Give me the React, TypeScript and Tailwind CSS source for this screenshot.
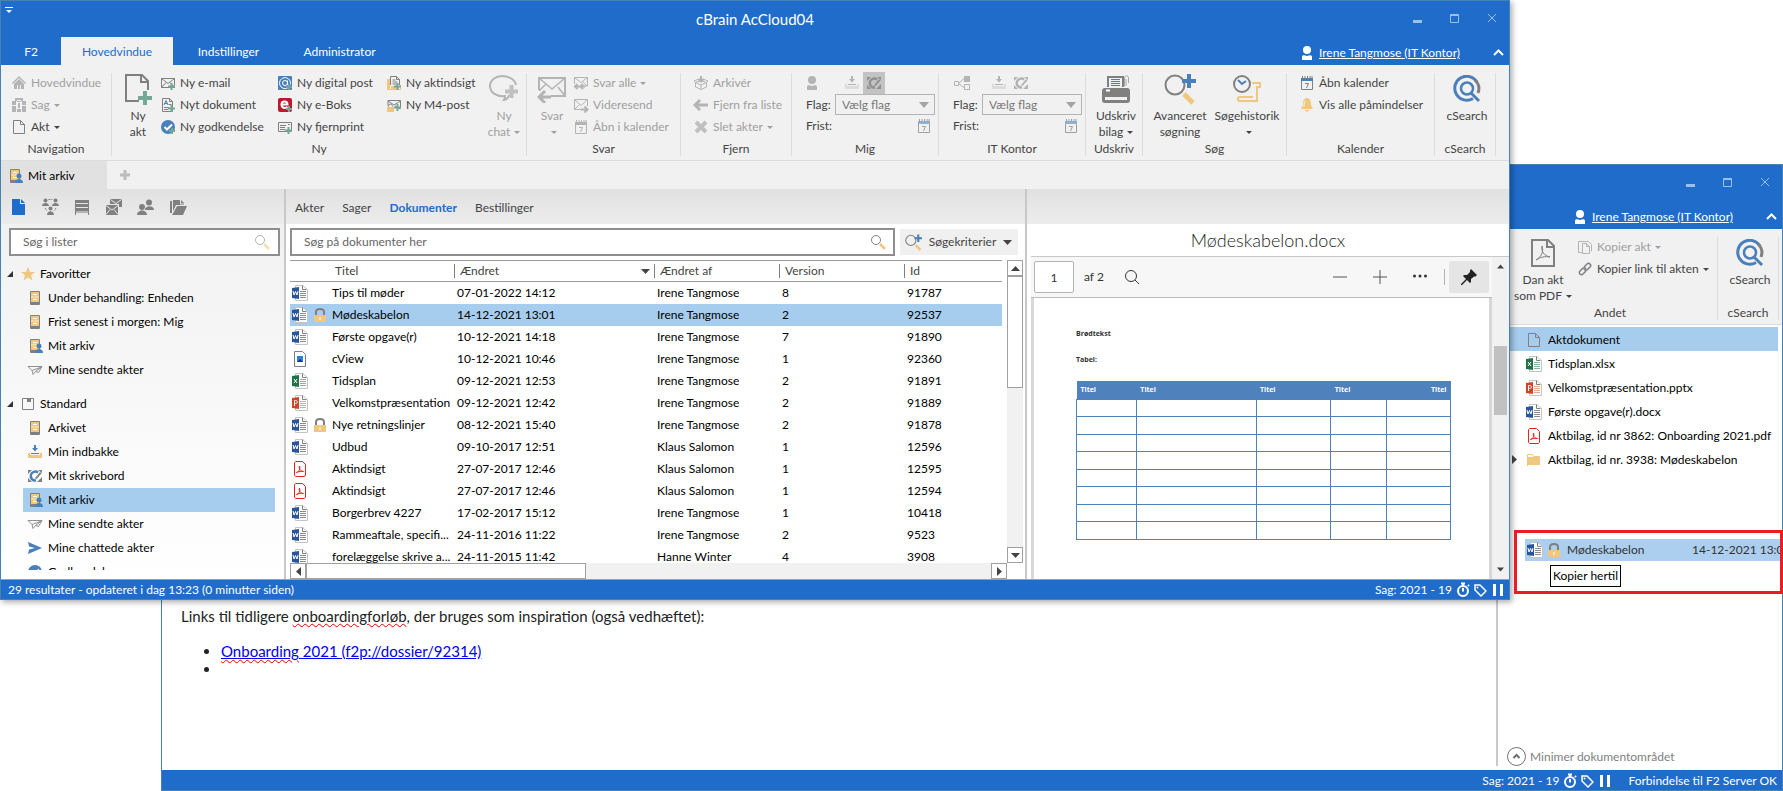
import type { ReactNode } from "react";

type Kids = { children?: ReactNode };
type Tone = { muted?: boolean };

const GREY = "#808080";
const SOFT = "#b4b4b4";
const BLUE = "#4a80ba";
const SAND = "#efc77f";
const GREEN = "#74a896";

/* ---------- icons ---------- */

function Svg({ w = 16, h = 16, vb, className = "", children }: Kids & { w?: number; h?: number; vb?: string; className?: string }) {
  return (
    <svg width={w} height={h} viewBox={vb ?? `0 0 ${w} ${h}`} fill="none" className={`shrink-0 ${className}`} aria-hidden="true">
      {children}
    </svg>
  );
}

function Plus({ x, y, s = 7, c = GREEN }: { x: number; y: number; s?: number; c?: string }) {
  const t = s > 10 ? 4 : 2;
  return <path d={`M${x + s / 2} ${y}v${s}M${x} ${y + s / 2}h${s}`} stroke={c} strokeWidth={t} />;
}

const HouseIcon = () => (
  <Svg>
    <path d="M8 1 1 8l1 1 6-6 6 6 1-1z" fill={SOFT} />
    <path d="M3 9l5-5 5 5v5h-3v-4H9v4H7v-4H6v4H3z" fill={SOFT} />
  </Svg>
);

const CaseIcon = () => (
  <Svg>
    <path d="M5 4V2h6v2" stroke={SOFT} strokeWidth="2" />
    <path d="M1 4h4v4H1zM11 4h4v4h-4zM6 4h4v1H6zM1 9h4v6H1zM11 9h4v6h-4zM6 12h4v3H6zM7 6h2v5H7z" fill={SOFT} />
  </Svg>
);

const PageIcon = ({ c = GREY }: { c?: string }) => (
  <Svg>
    <path d="M2.500 1.500h7l4 4v9h-11z" stroke={c} />
    <path d="M9.500 1.500v4h4" stroke={c} />
  </Svg>
);

const NewRecordIcon = () => (
  <Svg w={30} h={32}>
    <path d="M16 28H3V2h16l6 6v9" stroke={GREY} strokeWidth="2" />
    <path d="M18 2v7h7" stroke={GREY} strokeWidth="2" />
    <Plus x={15} y={18} s={14} />
  </Svg>
);

const Envelope = ({ c = GREY }: { c?: string }) => <path d="M1.500 3.500h13v9h-13zM1.500 3.500l6.500 5 6.500-5M1.500 12.500l4.500-5M14.500 12.500 10 7.500" stroke={c} />;

const NewMailIcon = () => (
  <Svg>
    <Envelope />
    <Plus x={8} y={8} />
  </Svg>
);

const NewDocIcon = () => (
  <Svg>
    <path d="M2.500 1.500h7l3 3v10h-10z" stroke={GREY} />
    <path d="M9.500 1.500v3h3M4 10.500h5M4 12.500h4M8.500 7.500h3" stroke={GREY} />
    <path d="M4 8l2-4.500L8 8M5 6.500h2" stroke={BLUE} />
    <Plus x={8} y={8} />
  </Svg>
);

const ApprovalIcon = ({ plus = true }: { plus?: boolean }) => (
  <Svg>
    <circle cx="8" cy="8" r="7" fill={BLUE} />
    <path d="M4.500 8l2.500 2.500 5-5" stroke="#fff" strokeWidth="2" />
    {plus && <Plus x={9} y={9} s={6} />}
  </Svg>
);

const DigitalPostIcon = () => (
  <Svg>
    <rect x="1" y="1" width="14" height="14" rx="1" fill={BLUE} />
    <circle cx="8" cy="8" r="2.500" stroke="#fff" />
    <path d="M10.500 5.500v4c1 2 3 .5 3-1.500a5.500 5.500 0 1 0-3 5" stroke="#fff" />
    <Plus x={9} y={9} s={6} />
  </Svg>
);

const EBoksIcon = () => (
  <Svg>
    <rect x="1" y="1" width="14" height="14" rx="2" fill="#c0172d" />
    <path d="M4.500 7.500h6c0-4-6-4-6 0s4 4 6 2.500" stroke="#fff" strokeWidth="2" />
    <Plus x={9} y={9} s={6} />
  </Svg>
);

const RemotePrintIcon = () => (
  <Svg>
    <path d="M1.500 3.500h13v9h-13zM3 6.500h6M3 8.500h5M3 10.500h5M11 5.500h2" stroke={GREY} />
    <Plus x={8} y={8} />
  </Svg>
);

const AccessIcon = () => (
  <Svg>
    <path d="M1 4h3v10h10v-4h1v5H1z" fill={SAND} />
    <path d="M4.500 10V1.500h6l3 3V10M10.500 1.500v3h3M6.500 5h3M6.500 7h5M6.500 9h5" stroke={GREY} />
    <path d="M5 11h8v4H5z" fill={SAND} />
    <Plus x={8} y={8} />
  </Svg>
);

const M4Icon = () => (
  <Svg>
    <path d="M2 9V3.500h12.500v7M2 4l6 4 6.500-4M9 9l5.500 3" stroke={GREY} />
    <path d="M2.500 9.500c0-3 4-3 4 0" stroke={GREY} />
    <path d="M1 10h7v5H1z" fill={SAND} />
    <Plus x={8} y={7} />
  </Svg>
);

const ChatIcon = () => (
  <Svg w={32} h={30}>
    <path d="M21 21c-1 3-3 5-5 5 1-1 1-3 1-4C8 23 2 18 2 12 2 6 8 2 14 2s13 3 14 9" stroke={SOFT} strokeWidth="2" />
    <Plus x={17} y={11} s={13} c="#c0c0c0" />
  </Svg>
);

const ReplyIcon = () => (
  <Svg w={30} h={28}>
    <path d="M2 15V3h26v18H14" stroke={SOFT} strokeWidth="2" />
    <path d="M2 3l13 11L28 3M2 16l7-7M28 21l-7-9" stroke={SOFT} strokeWidth="1.500" />
    <path d="M14 22H3M8 16l-6 6 6 6" stroke={SOFT} strokeWidth="3" />
  </Svg>
);

const ReplyAllIcon = () => (
  <Svg>
    <path d="M1.500 9V2.500h13V11H11M1.500 2.500l6.500 5 6.500-5M14 11l-4-4" stroke={SOFT} />
    <path d="M4.500 9 2 11.500 4.500 14M2 11.500h5M10 9l-2.500 2.500L10 14M8 11.500h4" stroke={SOFT} strokeWidth="2" />
  </Svg>
);

const ForwardIcon = () => (
  <Svg>
    <path d="M8 12.500H1.500v-10h13V9M1.500 2.500l6.500 6 6.500-6M1.500 12.500l5-5" stroke={SOFT} />
    <path d="M8 12.500h6M11.500 9.500l3 3-3 3" stroke={SOFT} strokeWidth="2" />
  </Svg>
);

const CalendarIcon = ({ top = BLUE, line = GREY }: { top?: string; line?: string }) => (
  <Svg>
    <path d="M2 3h12v3H2z" fill={top} />
    <path d="M3.500 1v3M6 1v3M8.500 1v3M11 1v3M13 1v3" stroke={line} />
    <path d="M2.500 6v8.500h11V6" stroke={line} />
    <path d="M6 8.500h3.500L7.500 13" stroke={line} />
  </Svg>
);

const ArchiveIcon = () => (
  <Svg>
    <path d="M2.500 7.500 8 10l5.500-2.500V12L8 14.500 2.500 12zM8 10v4.500M2.500 7.500 1 6l5-2M13.500 7.500 15 6l-5-2M2.500 7.500 8 5.500l5.500 2" stroke={SOFT} />
    <path d="M8 1v5M5.500 4 8 6.500 10.500 4" stroke={SOFT} strokeWidth="2" />
  </Svg>
);

const BackIcon = () => (
  <Svg>
    <path d="M15 8H4M7 3 2 8l5 5" stroke={SOFT} strokeWidth="3" />
  </Svg>
);

const DeleteIcon = () => (
  <Svg>
    <path d="M3 3l10 10M13 3 3 13" stroke="#c0c0c0" strokeWidth="4" />
  </Svg>
);

const PersonIcon = ({ c = SOFT }: { c?: string }) => (
  <Svg w={12} h={16}>
    <circle cx="6" cy="5" r="4" fill={c} />
    <path d="M1 15v-3c0-2 2-2 5-1 3-1 5-1 5 1v3z" fill={c} />
  </Svg>
);

const InboxIcon = ({ arrow = SOFT, tray = "#dcdcdc" }: { arrow?: string; tray?: string }) => (
  <Svg>
    <path d="M1 9h2v2h10V9h2v5H1z" fill={tray} />
    <path d="M7 1h2v3h2L8 7.500 5 4h2z" fill={arrow} />
    <path d="M4 9.500h8" stroke={arrow} />
  </Svg>
);

const DeskIcon = ({ c = GREY, a = BLUE }: { c?: string; a?: string }) => (
  <Svg>
    <path d="M1 2h4L1 6zM11 2h4v3zM1 10l4 4H1zM15 9v5h-5z" fill={c} />
    <path d="M11 4.500A4.500 4.500 0 1 0 9 12.500" stroke={a} strokeWidth="2.500" />
    <path d="M8 11.500l.5-2L13 4l1.500 1.500-4.500 5z" fill={c} />
  </Svg>
);

const UnitIcon = () => (
  <Svg w={18} h={16}>
    <path d="M1.500 6.500h4v4h-4zM5.500 8.500 11 3.500M5.500 8.500l5.500 4" stroke={SOFT} />
    <path d="M11 1h6v6h-6z" fill={SOFT} />
    <path d="M11.500 9.500h5v5h-5z" stroke={SOFT} />
  </Svg>
);

const PrinterIcon = () => (
  <Svg w={30} h={30}>
    <path d="M7 13V3h15v10" stroke={GREY} strokeWidth="2" />
    <path d="M10 5.500h9M10 7.500h9M10 9.500h9M10 11.500h9" stroke={BLUE} />
    <path d="M25 5v7M27.500 9V4c0-3-4-3-4 0v8" stroke="#a8a8a8" />
    <rect x="1" y="14" width="28" height="15" rx="3" fill={GREY} />
    <path d="M4 23h22v3H4z" fill="#f1f1f1" />
    <path d="M5 16.500h4" stroke="#fff" strokeWidth="2" />
  </Svg>
);

const AdvancedSearchIcon = ({ w = 32 }: { w?: number }) => (
  <Svg w={w} h={w} vb="0 0 32 32">
    <circle cx="11" cy="12" r="9.500" stroke={GREY} strokeWidth="2" />
    <path d="M20 21l9 9" stroke={SAND} strokeWidth="5" />
    <path d="M25 1v14M18 8h14" stroke={BLUE} strokeWidth="4" />
  </Svg>
);

const HistoryIcon = () => (
  <Svg w={30} h={32}>
    <circle cx="10" cy="11" r="8" stroke={GREY} strokeWidth="2" />
    <path d="M6 7l4 4 4-3" stroke={BLUE} strokeWidth="2" />
    <path d="M20 10h8v4h-3v14H8c-3 0-3-4 0-4h13" stroke={SAND} strokeWidth="2" />
  </Svg>
);

const BellIcon = () => (
  <Svg>
    <path d="M8 1c-4 1-4 4-4 7l-2 4h12l-2-4c0-3 0-6-4-7zM6 13h4c0 2-4 2-4 0z" fill={SAND} />
    <path d="M6 4c-1 2-1 4-1 6" stroke="#fff6e2" />
  </Svg>
);

const CSearchIcon = () => (
  <Svg w={28} h={28}>
    <path d="M20 23.500A12 12 0 1 1 24 7" stroke={BLUE} strokeWidth="3" />
    <path d="M22 5a12 12 0 0 1 3 13" stroke={GREY} strokeWidth="3" />
    <circle cx="14" cy="13.500" r="6" stroke={BLUE} strokeWidth="2.500" />
    <path d="M18 18l8 8" stroke={BLUE} strokeWidth="3" />
  </Svg>
);

const CabinetIcon = ({ person = false }: { person?: boolean }) => (
  <Svg>
    <rect x="3" y="1" width="10" height="14" rx="1" fill={GREY} />
    <path d="M4 2h8v10H4z" fill={SAND} />
    <path d="M4 7h8" stroke="#fbe9c6" />
    <path d="M6 4.500h4M6 9.500h4" stroke="#fff" />
    {person && (
      <>
        <circle cx="12" cy="8" r="2.500" fill={BLUE} />
        <path d="M8 15c0-3 2-4 4-4s4 1 4 4z" fill={BLUE} />
      </>
    )}
  </Svg>
);

const StarIcon = () => (
  <Svg>
    <path d="M8 1l2 5h5l-4 3.500 1.500 5L8 11.500l-4.500 3 1.500-5L1 6h5z" fill={SAND} />
  </Svg>
);

const SentIcon = () => (
  <Svg>
    <path d="M1 4.500h14l-3.500 6-3-1-2.500 3-1-4z" stroke="#909090" />
    <path d="M5 8.500 14.500 5 8.500 9.500" stroke="#909090" />
  </Svg>
);

const ChattedIcon = () => (
  <Svg>
    <path d="M1 2l14 6-14 6 1-4.500L8 8 2 6.500z" fill={BLUE} />
  </Svg>
);

const StandardIcon = () => (
  <Svg>
    <path d="M2.500 2.500h11v11h-11z" stroke={GREY} />
    <path d="M7 2h4v4H7z" fill={GREY} />
  </Svg>
);

const SearchGlass = ({ faded = false }: { faded?: boolean }) => (
  <Svg className={faded ? "opacity-60" : ""}>
    <circle cx="6" cy="6" r="4.500" stroke={GREY} />
    <path d="M10 10l5 5" stroke={SAND} strokeWidth="2.500" />
  </Svg>
);

const LockIcon = () => (
  <Svg w={14} h={16}>
    <path d="M3 8V5c0-4 8-4 8 0v3" stroke={GREY} strokeWidth="2" />
    <path d="M1 8h12v7H1z" fill={SAND} />
    <path d="M7 10v3" stroke="#fff" />
  </Svg>
);

const OFFICE: Record<string, { c: string; line: string; d: string }> = {
  word: { c: "#2a5699", line: "#8a8a8a", d: "M1 6l1 4 1.500-3.500L5 10l1-4" },
  excel: { c: "#207347", line: "#7fb898", d: "M2 6l3 4M5 6l-3 4" },
  ppt: { c: "#d24625", line: "#eba38f", d: "M2.500 11V5.500h1c2.500 0 2.500 3 0 3h-1" },
};

const FileIcon = ({ kind }: { kind: string }) => {
  const o = OFFICE[kind];
  if (o) {
    return (
      <Svg>
        <path d="M3.500.500h7l5 4v11h-12z" fill="#fff" stroke="#c4c4c4" />
        <path d="M10.500.500v4h4" stroke="#808080" />
        <path d="M8 6.500h6M8 8.500h6M8 10.500h6M8 12.500h6" stroke={o.line} />
        <path d="M0 3l7-1v12l-7-1z" fill={o.c} />
        <path d={o.d} stroke="#fff" />
      </Svg>
    );
  }
  if (kind === "pdf") {
    return (
      <Svg>
        <path d="M4 .500h6.500l3 3V14c0 1-1 1.500-1.500 1.500H4c-1 0-1.500-1-1.500-1.500V2c0-1 1-1.500 1.500-1.500z" fill="#fff" stroke="#e8231c" />
        <path d="M4.500 11.500c3-1 4-4 3-6.500-1 3 1 5 4 5.500-2-.5-5 0-7 1z" stroke="#e8231c" />
      </Svg>
    );
  }
  if (kind === "folder") {
    return (
      <Svg>
        <path d="M1.500 14V2.500h5l1 2h6V6" stroke={SAND} />
        <path d="M2 5h12v8H2z" fill={SAND} />
      </Svg>
    );
  }
  if (kind === "image") {
    return (
      <Svg>
        <path d="M2.500.500h8l3 3v12h-11z" fill="#fff" stroke={GREY} />
        <path d="M5 5h6v6H5z" fill="#2f7fd6" />
        <path d="M5 11l3-3 3 3z" fill="#123a6b" />
      </Svg>
    );
  }
  return <PageIcon />;
};

const Caret = ({ c = "#444" }: { c?: string }) => (
  <Svg w={6} h={4} className="ml-1 inline-block align-middle">
    <path d="M0 0h6L3 3z" fill={c} />
  </Svg>
);

const Triangle = ({ dir, s = 9 }: { dir: "up" | "down" | "left" | "right"; s?: number }) => {
  const d = { up: "M0 7h9L4.500 2z", down: "M0 2h9L4.500 7z", left: "M7 0v9L2 4.500z", right: "M2 0v9l5-4.500z" }[dir];
  return (
    <Svg w={s} h={s} vb="0 0 9 9">
      <path d={d} fill="#444" />
    </Svg>
  );
};

/* ---------- window chrome ---------- */

function TitleBar({ title, tabs = [] }: { title?: string; tabs?: string[] }) {
  return (
    <header className="shrink-0 bg-[#206ccb] text-white">
      <div className="grid h-9 grid-cols-[1fr_auto_1fr]">
        <div className="p-1.5">
          {title && (
            <Svg w={8} h={7} className="-ml-0.5">
              <path d="M0 .5h8" stroke="#fff" />
              <path d="M1 3h6L4 6z" fill="#fff" />
            </Svg>
          )}
        </div>
        <h1 className="self-center text-[15px]">{title}</h1>
        <div className="flex items-start justify-end gap-7 pt-3 pr-3 text-[#9dc0ea]">
          <button aria-label="Minimer">
            <Svg w={9} h={10}>
              <path d="M0 8.500h9" stroke="currentColor" strokeWidth="3" />
            </Svg>
          </button>
          <button aria-label="Maksimer">
            <Svg w={9} h={10}>
              <path d="M.5 1.500h8v8h-8zM0 2.500h9" stroke="currentColor" />
            </Svg>
          </button>
          <button aria-label="Luk">
            <Svg w={10} h={10}>
              <path d="M1 1l8 8M9 1 1 9" stroke="currentColor" />
            </Svg>
          </button>
        </div>
      </div>
      <div className="flex h-7 items-stretch">
        {tabs.map((t, i) => (
          <button key={t} className={`pt-0.5 ${i === 0 ? "w-15" : i === 1 ? "w-28 bg-[#f1f1f1] text-[#206ccb]" : "w-[111px]"}`}>
            {t}
          </button>
        ))}
        <div className="ml-auto flex items-center pt-1 pr-[5px]">
          <PersonIcon c="#fff" />
          <a href="#bruger" className="mr-[33px] ml-1.5 underline">Irene Tangmose (IT Kontor)</a>
          <button aria-label="Skjul bånd">
            <Svg w={11} h={8}>
              <path d="M1 6l4.500-4.500L10 6" stroke="#fff" strokeWidth="2" />
            </Svg>
          </button>
        </div>
      </div>
    </header>
  );
}

function Group({ label, className, children }: Kids & { label: string; className: string }) {
  return (
    <section className={`flex shrink-0 flex-col ${className}`}>
      <div className="mt-[7px] mb-px flex h-[66px] items-start">{children}</div>
      <h2 className="text-center leading-5">{label}</h2>
    </section>
  );
}

const Divider = () => <div className="mt-2 mb-1 w-px shrink-0 bg-[#dcdcdc]" />;

function Small({ icon, caret, muted, children }: Kids & Tone & { icon: ReactNode; caret?: boolean }) {
  return (
    <button className={`flex h-[22px] items-center gap-1 whitespace-nowrap ${muted ? "text-[#a0a0a0]" : ""}`}>
      {icon}
      <span>
        {children}
        {caret && <Caret c={muted ? "#a0a0a0" : "#444"} />}
      </span>
    </button>
  );
}

function Big({ icon, muted, className, children }: Kids & Tone & { icon: ReactNode; className: string }) {
  return (
    <button className={`flex flex-col items-center text-center leading-4 whitespace-nowrap ${muted ? "text-[#a0a0a0]" : ""} ${className}`}>
      <span className="mb-0.5 flex h-[34px] items-center">{icon}</span>
      <span>{children}</span>
    </button>
  );
}

function FlagGroup({ label, unit }: { label: string; unit?: boolean }) {
  const id = unit ? "flag-unit" : "flag-me";
  return (
    <Group label={label} className="w-[146px]">
      <div className="w-full pr-[3px] pl-3.5">
        <div className="flex h-[22px] items-center">
          <span className="w-[35px]">{unit ? <UnitIcon /> : <PersonIcon />}</span>
          <button className="flex h-[22px] w-[22px] items-center justify-center" aria-label="Indbakke"><InboxIcon /></button>
          <button className={`flex h-[22px] w-[22px] items-center justify-center ${unit ? "" : "bg-[#c3c3c3]"}`} aria-label="Skrivebord">
            <DeskIcon c={unit ? SOFT : "#909090"} a={unit ? SOFT : "#909090"} />
          </button>
        </div>
        <div className="flex items-center">
          <label htmlFor={id} className="w-[29px] shrink-0">Flag:</label>
          <div className="relative flex-1">
            <select id={id} className="h-[21px] w-full appearance-none border border-[#b4b4b4] bg-[#f1f1f1] pl-1.5 text-[#777] outline-none">
              <option>Vælg flag</option>
            </select>
            <Svg w={10} h={6} className="pointer-events-none absolute top-2 right-1.5">
              <path d="M0 0h10L5 6z" fill="#a4a4a4" />
            </Svg>
          </div>
        </div>
        <div className="flex h-[22px] items-center justify-between pr-[3px]">
          <span>Frist:</span>
          <button aria-label="Vælg frist"><CalendarIcon top="#8fb0d6" line="#a0a0a0" /></button>
        </div>
      </div>
    </Group>
  );
}

function Ribbon() {
  return (
    <div className="flex h-24 shrink-0 overflow-hidden border-b border-[#dcdcdc] bg-[#f1f1f1] text-[#444]">
      <Group label="Navigation" className="w-[110px]">
        <div className="pl-2.5">
          <Small icon={<HouseIcon />} muted>Hovedvindue</Small>
          <Small icon={<CaseIcon />} muted caret>Sag</Small>
          <Small icon={<PageIcon />} caret>Akt</Small>
        </div>
      </Group>
      <Divider />
      <Group label="Ny" className="w-[414px]">
        <Big icon={<NewRecordIcon />} className="w-12 pl-1">Ny<br />akt</Big>
        <div className="w-[117px]">
          <Small icon={<NewMailIcon />}>Ny e-mail</Small>
          <Small icon={<NewDocIcon />}>Nyt dokument</Small>
          <Small icon={<ApprovalIcon />}>Ny godkendelse</Small>
        </div>
        <div className="w-[109px]">
          <Small icon={<DigitalPostIcon />}>Ny digital post</Small>
          <Small icon={<EBoksIcon />}>Ny e-Boks</Small>
          <Small icon={<RemotePrintIcon />}>Ny fjernprint</Small>
        </div>
        <div className="w-[96px]">
          <Small icon={<AccessIcon />}>Ny aktindsigt</Small>
          <Small icon={<M4Icon />}>Ny M4-post</Small>
        </div>
        <Big icon={<ChatIcon />} className="w-11" muted>Ny<br />chat<Caret c="#a0a0a0" /></Big>
      </Group>
      <Divider />
      <Group label="Svar" className="w-[153px]">
        <Big icon={<ReplyIcon />} className="w-[46px] pl-1" muted>Svar<br /><Caret c="#a0a0a0" /></Big>
        <div>
          <Small icon={<ReplyAllIcon />} muted caret>Svar alle</Small>
          <Small icon={<ForwardIcon />} muted>Videresend</Small>
          <Small icon={<CalendarIcon top={SOFT} line={SOFT} />} muted>Åbn i kalender</Small>
        </div>
      </Group>
      <Divider />
      <Group label="Fjern" className="w-[110px]">
        <div className="pl-3">
          <Small icon={<ArchiveIcon />} muted>Arkivér</Small>
          <Small icon={<BackIcon />} muted>Fjern fra liste</Small>
          <Small icon={<DeleteIcon />} muted caret>Slet akter</Small>
        </div>
      </Group>
      <Divider />
      <FlagGroup label="Mig" />
      <Divider />
      <FlagGroup label="IT Kontor" unit />
      <Divider />
      <Group label="Udskriv" className="w-14">
        <Big icon={<PrinterIcon />} className="w-full pl-1">Udskriv<br />bilag<Caret /></Big>
      </Group>
      <Divider />
      <Group label="Søg" className="w-[143px]">
        <Big icon={<AdvancedSearchIcon />} className="w-[74px]">Avanceret<br />søgning</Big>
        <Big icon={<HistoryIcon />} className="w-15">Søgehistorik<br /><Caret /></Big>
      </Group>
      <Divider />
      <Group label="Kalender" className="w-[147px]">
        <div className="pl-3">
          <Small icon={<CalendarIcon />}>Åbn kalender</Small>
          <Small icon={<BellIcon />}>Vis alle påmindelser</Small>
        </div>
      </Group>
      <Divider />
      <Group label="cSearch" className="w-[60px]">
        <Big icon={<CSearchIcon />} className="w-full pl-1">cSearch</Big>
      </Group>
      <Divider />
    </div>
  );
}

function StatusIcons() {
  return (
    <>
      <span>Sag: 2021 - 19</span>
      <Svg w={14} h={16} className="ml-1">
        <circle cx="7" cy="9" r="5" stroke="#fff" strokeWidth="2" />
        <path d="M7 6v3.500M5 1.500h4M7 2v2M12 3l1 1" stroke="#fff" strokeWidth="2" />
      </Svg>
      <Svg w={14} h={14} className="ml-[3px]">
        <path d="M2 2h5l6 6-5 5-6-6z" stroke="#fff" strokeWidth="1.500" />
        <circle cx="4.500" cy="4.500" r="1" fill="#fff" />
      </Svg>
      <Svg w={10} h={12} className="mr-1.5 ml-1.5">
        <path d="M1.500 0v12M8.500 0v12" stroke="#fff" strokeWidth="3" />
      </Svg>
    </>
  );
}

/* ---------- left list ---------- */

const favourites = [
  { t: "Under behandling: Enheden", icon: <CabinetIcon /> },
  { t: "Frist senest i morgen: Mig", icon: <CabinetIcon /> },
  { t: "Mit arkiv", icon: <CabinetIcon person /> },
  { t: "Mine sendte akter", icon: <SentIcon /> },
];

const standard = [
  { t: "Arkivet", icon: <CabinetIcon /> },
  { t: "Min indbakke", icon: <InboxIcon arrow={BLUE} tray={SAND} /> },
  { t: "Mit skrivebord", icon: <DeskIcon /> },
  { t: "Mit arkiv", icon: <CabinetIcon person />, active: true },
  { t: "Mine sendte akter", icon: <SentIcon /> },
  { t: "Mine chattede akter", icon: <ChattedIcon /> },
  { t: "Godkendelser", icon: <ApprovalIcon plus={false} /> },
];

function TreeGroup({ label, icon, items }: { label: string; icon: ReactNode; items: { t: string; icon: ReactNode; active?: boolean }[] }) {
  return (
    <div className="mb-2.5">
      <button className="flex h-6 items-center pl-1.5">
        <Svg w={7} h={7} className="mr-1.5">
          <path d="M6 0v6H0z" fill="#333" />
        </Svg>
        {icon}
        <span className="pl-1">{label}</span>
      </button>
      <ul className="pr-[9px] pl-[22px]">
        {items.map((n) => (
          <li key={n.t}>
            <button className={`flex h-6 w-full items-center gap-[5px] pl-1 ${n.active ? "bg-[#a6cdee]" : ""}`}>
              {n.icon}
              {n.t}
            </button>
          </li>
        ))}
      </ul>
    </div>
  );
}

function Sidebar() {
  return (
    <nav className="flex w-[283px] shrink-0 flex-col bg-linear-to-b from-[#f0f0f0] to-white">
      <div className="flex h-[35px] shrink-0 items-center gap-[15px] bg-linear-to-b from-[#e1e1e1] to-[#ececec] pl-2.5">
        <Svg>
          <path d="M1 0h8v5h5v11H1zM10 0l4 4h-4z" fill="#206ccb" />
        </Svg>
        <Svg w={17} h={17}>
          <circle cx="3.500" cy="2.500" r="2" fill={GREY} />
          <circle cx="13.500" cy="2.500" r="2" fill={GREY} />
          <circle cx="8.500" cy="10.500" r="2" fill={GREY} />
          <path d="M0 8c0-4 7-4 7 0zM10 8c0-4 7-4 7 0zM5 17c0-5 7-5 7 0z" fill={GREY} />
          <path d="M6.500 1.500h4M3 10l2 3M14 10l-2 3" stroke={GREY} strokeDasharray="2 1" />
        </Svg>
        <Svg>
          <path d="M1 2.500h14M1 6.500h14M1 10.500h14" stroke={GREY} strokeWidth="3" />
          <path d="M1 13h14M1.500 1v15M14.500 1v15" stroke={GREY} />
        </Svg>
        <Svg w={17}>
          <path d="M5 0h12v8h-3V5H5z" fill={GREY} />
          <path d="M1 6h12v10H1z" fill={GREY} />
          <path d="M1 6.500 7 11l6-4.500M1 15.500l4-5M13 15.500l-4-5M5.500.500l5.500 4 5.500-4" stroke="#e6e6e6" />
        </Svg>
        <Svg w={17}>
          <circle cx="12" cy="3.500" r="3" fill={GREY} />
          <path d="M8 11c0-5 9-5 9 0z" fill={GREY} />
          <circle cx="5" cy="8" r="3" fill={GREY} />
          <path d="M0 16c0-6 10-6 10 0z" fill={GREY} />
        </Svg>
        <Svg w={18}>
          <path d="M1 2h2v12H1zM4 1h8l3 3v2H7l-3 7z" fill={GREY} />
          <path d="M8 7h10l-4 9H3z" fill={GREY} />
          <path d="M11.500 1v4h4M3 15 7.500 6.500H16" stroke="#e6e6e6" />
        </Svg>
      </div>
      <div className="mt-1 mr-1 ml-2 flex h-7 shrink-0 items-center border-2 border-[#8e8e8e] bg-white pr-2 pl-3">
        <input aria-label="Søg i lister" placeholder="Søg i lister" className="min-w-0 flex-1 outline-none placeholder:text-[#666]" />
        <SearchGlass faded />
      </div>
      <div className="mt-1.5 mb-[9px] min-h-0 flex-1 overflow-hidden">
        <TreeGroup label="Favoritter" icon={<StarIcon />} items={favourites} />
        <TreeGroup label="Standard" icon={<StandardIcon />} items={standard} />
      </div>
    </nav>
  );
}

/* ---------- document table ---------- */

const docs = [
  ["word", "Tips til møder", "07-01-2022 14:12", "Irene Tangmose", "8", "91787"],
  ["word", "Mødeskabelon", "14-12-2021 13:01", "Irene Tangmose", "2", "92537", "lock"],
  ["word", "Første opgave(r)", "10-12-2021 14:18", "Irene Tangmose", "7", "91890"],
  ["image", "cView", "10-12-2021 10:46", "Irene Tangmose", "1", "92360"],
  ["excel", "Tidsplan", "09-12-2021 12:53", "Irene Tangmose", "2", "91891"],
  ["ppt", "Velkomstpræsentation", "09-12-2021 12:42", "Irene Tangmose", "2", "91889"],
  ["word", "Nye retningslinjer", "08-12-2021 15:40", "Irene Tangmose", "2", "91878", "lock"],
  ["word", "Udbud", "09-10-2017 12:51", "Klaus Salomon", "1", "12596"],
  ["pdf", "Aktindsigt", "27-07-2017 12:46", "Klaus Salomon", "1", "12595"],
  ["pdf", "Aktindsigt", "27-07-2017 12:46", "Klaus Salomon", "1", "12594"],
  ["word", "Borgerbrev 4227", "17-02-2017 15:12", "Irene Tangmose", "1", "10418"],
  ["word", "Rammeaftale, specifi...", "24-11-2016 11:22", "Irene Tangmose", "2", "9523"],
  ["word", "forelæggelse skrive a...", "24-11-2015 11:42", "Hanne Winter", "4", "3908"],
];

function DocTable() {
  return (
    <table className="w-full table-fixed border-collapse">
      <colgroup>
        <col className="w-5" />
        <col className="w-[21px]" />
        <col className="w-[123px]" />
        <col className="w-[200px]" />
        <col className="w-[125px]" />
        <col className="w-[125px]" />
        <col />
      </colgroup>
      <thead className="text-[#444]">
        <tr className="h-[21px] border-y border-[#9b9b9b] text-left">
          <th colSpan={2} aria-label="Type" />
          <th className="pl-1 font-normal">Titel</th>
          <th className="font-normal">
            <div className="flex h-3.5 items-center justify-between border-l border-[#808080] pr-1 pl-[5px]">
              Ændret <Triangle dir="down" />
            </div>
          </th>
          {["Ændret af", "Version", "Id"].map((h) => (
            <th key={h} className="font-normal">
              <div className="flex h-3.5 items-center border-l border-[#808080] pl-[5px]">{h}</div>
            </th>
          ))}
        </tr>
      </thead>
      <tbody>
        {docs.map(([kind, title, date, by, version, id, lock]) => (
          <tr key={id} className={`h-[22px] ${id === "92537" ? "bg-[#a6cdee]" : ""}`}>
            <td className="pl-0.5"><FileIcon kind={kind} /></td>
            <td className="pl-[3px]">{lock && <LockIcon />}</td>
            <td className="pl-px whitespace-nowrap">{title}</td>
            <td className="pl-[3px]">{date}</td>
            <td className="pl-[3px]">{by}</td>
            <td className="pl-[3px]">{version}</td>
            <td className="pl-[3px]">{id}</td>
          </tr>
        ))}
      </tbody>
    </table>
  );
}

const arrowBox = "flex size-4 shrink-0 items-center justify-center border border-[#a0a0a0] bg-white";

function DocList() {
  return (
    <main className="flex min-w-0 flex-1 flex-col bg-white">
      <div className="flex h-[35px] shrink-0 items-center gap-[18px] bg-linear-to-b from-[#e1e1e1] to-[#ececec] pt-0.5 pl-[9px] text-[#444]">
        <button>Akter</button>
        <button>Sager</button>
        <button className="font-bold text-[#206ccb]">Dokumenter</button>
        <button>Bestillinger</button>
      </div>
      <div className="mt-1 flex shrink-0 gap-[5px] pr-[7px] pl-1">
        <div className="flex h-7 flex-1 items-center border-2 border-[#8e8e8e] pr-[7px] pl-3">
          <input aria-label="Søg på dokumenter her" placeholder="Søg på dokumenter her" className="min-w-0 flex-1 outline-none placeholder:text-[#666]" />
          <SearchGlass />
        </div>
        <button className="my-px flex w-[118px] items-center justify-between bg-[#f0f0f0] pr-1.5 pl-[5px] text-[#444]">
          <AdvancedSearchIcon w={17} />
          Søgekriterier
          <Triangle dir="down" />
        </button>
      </div>
      <div className="mt-1 flex min-h-0 flex-1 pr-0.5 pl-1">
        <div className="min-w-0 flex-1 overflow-hidden pr-[5px]">
          <DocTable />
        </div>
        <div className="flex w-4 flex-col bg-[#f1f1f1]">
          <button aria-label="Rul op" className={arrowBox}><Triangle dir="up" /></button>
          <div className="h-28 border border-[#a0a0a0] bg-white" />
          <button aria-label="Rul ned" className={`mt-auto ${arrowBox}`}><Triangle dir="down" /></button>
        </div>
      </div>
      <div className="mr-[18px] ml-1 flex h-4 shrink-0 bg-[#f1f1f1]">
        <button aria-label="Rul til venstre" className={arrowBox}><Triangle dir="left" /></button>
        <div className="w-[280px] border border-[#a0a0a0] bg-white" />
        <button aria-label="Rul til højre" className={`ml-auto ${arrowBox}`}><Triangle dir="right" /></button>
      </div>
    </main>
  );
}

/* ---------- preview ---------- */

function Preview() {
  return (
    <aside className="flex w-[482px] shrink-0 flex-col bg-white">
      <div className="h-[35px] shrink-0 bg-linear-to-b from-[#e1e1e1] to-[#ececec]" />
      <h2 className="flex h-8 shrink-0 items-center justify-center text-[18px] font-light text-[#222]">Mødeskabelon.docx</h2>
      <div className="ml-1 flex min-h-0 flex-1 border-t border-[#c8c8c8]">
        <div className="flex min-w-0 flex-1 flex-col">
          <div className="flex h-[41px] shrink-0 items-center border-b border-[#bdbdbd] bg-[#f7f7f7] px-[3px] text-[#333]">
            <input aria-label="Side" defaultValue="1" className="h-8 w-10 rounded-xs border border-[#b4b4b4] bg-white text-center" />
            <span className="mx-2.5 w-[30px] whitespace-nowrap">af 2</span>
            <button aria-label="Søg">
              <Svg>
                <circle cx="7" cy="7" r="5.500" stroke="#333" />
                <path d="M11 11l4 4" stroke="#333" />
              </Svg>
            </button>
            <div className="ml-auto flex items-center gap-6">
              <button aria-label="Zoom ud"><Svg><path d="M1 8h14" stroke="#555" /></Svg></button>
              <button aria-label="Zoom ind"><Svg><path d="M1 8h14M8 1v14" stroke="#555" /></Svg></button>
              <button aria-label="Mere">
                <Svg>
                  <circle cx="2.500" cy="7" r="1.500" fill="#333" />
                  <circle cx="8" cy="7" r="1.500" fill="#333" />
                  <circle cx="13.500" cy="7" r="1.500" fill="#333" />
                </Svg>
              </button>
            </div>
            <div className="mr-1 ml-4 h-4 w-px bg-[#b4b4b4]" />
            <button aria-label="Fastgør" className="flex h-8 w-10 items-center justify-center rounded-xs bg-[#e5e5e5]">
              <Svg>
                <path d="M10 0l6 6-1.500 1.500h-1.500L10 10v3l-1 1-3-3-5 5H0v-1l5-5-3-3 1-1h3l3-3V1.500z" fill="#222" />
              </Svg>
            </button>
          </div>
          <div className="min-h-0 flex-1 overflow-hidden bg-[#d8d8d8] px-[3px]">
            <div className="h-full bg-white pt-[31px] pr-[38px] pl-[42px] font-['Open_Sans',sans-serif] text-[7px] leading-[10px] font-bold text-[#333]">
              <p>Brødtekst</p>
              <p className="mt-4">Tabel:</p>
              <table className="mt-4 w-full table-fixed border-collapse">
                <colgroup>
                  <col className="w-[16%]" />
                  <col className="w-[32%]" />
                  <col className="w-[20%]" />
                  <col className="w-[15%]" />
                  <col />
                </colgroup>
                <thead>
                  <tr className="h-[18px] bg-[#4f81bd] text-left text-white">
                    {[0, 1, 2, 3, 4].map((n) => (
                      <th key={n} className={`border-[#4f81bd] px-1 ${n === 4 ? "text-right" : ""}`}>Titel</th>
                    ))}
                  </tr>
                </thead>
                <tbody>
                  {[0, 1, 2, 3, 4, 5, 6, 7].map((r) => (
                    <tr key={r} className={r % 2 ? "h-[18px]" : "h-[17px]"}>
                      {[0, 1, 2, 3, 4].map((n) => (
                        <td key={n} className="border border-[#4f81bd]" />
                      ))}
                    </tr>
                  ))}
                </tbody>
              </table>
            </div>
          </div>
        </div>
        <div className="flex w-[17px] flex-col items-center bg-[#f1f1f1] py-1.5">
          <Triangle dir="up" s={7} />
          <div className="mt-[76px] mb-auto h-[69px] w-[13px] bg-[#c1c1c1]" />
          <Triangle dir="down" s={7} />
        </div>
      </div>
    </aside>
  );
}

/* ---------- windows ---------- */

function MainWindow() {
  return (
    <div className="absolute top-0 right-[273px] bottom-[191px] left-0 flex flex-col border border-[#4682b4] bg-white shadow-[2px_2px_6px_rgba(0,0,0,0.35)]">
      <TitleBar title="cBrain AcCloud04" tabs={["F2", "Hovedvindue", "Indstillinger", "Administrator"]} />
      <Ribbon />
      <div className="flex h-7 shrink-0 bg-[#f1f1f1]">
        <button className="flex w-[106px] items-center gap-[5px] bg-[#e1e1e1] pt-px pl-1.5">
          <CabinetIcon person />
          Mit arkiv
        </button>
        <button aria-label="Ny fane" className="ml-3">
          <Svg w={12} h={12}>
            <path d="M6 1v10M1 6h10" stroke="#bcbcbc" strokeWidth="3" />
          </Svg>
        </button>
      </div>
      <div className="flex min-h-0 flex-1">
        <Sidebar />
        <div className="w-0.5 bg-[#c8c8c8]" />
        <DocList />
        <div className="w-0.5 bg-[#c8c8c8]" />
        <Preview />
      </div>
      <footer className="flex h-5 shrink-0 items-center border-t border-[#a0a0a0] bg-[#206ccb] pl-[7px] text-white">
        <span className="mr-auto">29 resultater - opdateret i dag 13:23 (0 minutter siden)</span>
        <StatusIcons />
      </footer>
    </div>
  );
}

const attachments = [
  ["page", "Aktdokument"],
  ["excel", "Tidsplan.xlsx"],
  ["ppt", "Velkomstpræsentation.pptx"],
  ["word", "Første opgave(r).docx"],
  ["pdf", "Aktbilag, id nr 3862: Onboarding 2021.pdf"],
  ["folder", "Aktbilag, id nr. 3938: Mødeskabelon"],
];

function RecordWindow() {
  return (
    <div className="absolute top-[164px] right-0 bottom-0 left-[161px] flex flex-col border border-[#4682b4] bg-white">
      <TitleBar />
      <div className="flex h-24 shrink-0 justify-end border-b border-[#dcdcdc] bg-[#f1f1f1] pr-[3px] text-[#444]">
        <Group label="Andet" className="w-[214px]">
          <Big
            icon={
              <Svg w={26} h={30}>
                <path d="M2 2h16l6 6v20H2z" stroke={GREY} strokeWidth="2" />
                <path d="M17 2v7h7" stroke={GREY} strokeWidth="2" />
                <path d="M6 22c5-3 8-8 6-14-1 5 2 10 8 11-5-1-9 0-14 3z" stroke={GREY} />
              </Svg>
            }
            className="w-[74px] pl-1.5"
          >
            Dan akt<br />som PDF<Caret />
          </Big>
          <div>
            <Small
              muted
              caret
              icon={
                <Svg>
                  <path d="M5.500 13.500h-4v-11h6M5.500 4.500h4l3 3v7h-7zM9.500 4.500v3h3M7.500 2.500h4l3 3v7" stroke={SOFT} />
                </Svg>
              }
            >
              Kopier akt
            </Small>
            <Small
              caret
              icon={
                <Svg>
                  <path d="M7 6l3-3c2-2 5 1 3 3l-2.500 2.500c-1 1-3 1-3.500-.5M9 10l-3 3c-2 2-5-1-3-3l2.500-2.500c1-1 3-1 3.500.5" stroke={GREY} strokeWidth="1.500" />
                </Svg>
              }
            >
              Kopier link til akten
            </Small>
          </div>
        </Group>
        <Divider />
        <Group label="cSearch" className="w-[60px]">
          <Big icon={<CSearchIcon />} className="w-full pl-1">cSearch</Big>
        </Group>
        <Divider />
      </div>
      <div className="flex min-h-0 flex-1">
        <article className="flex-1 pt-[281px] pl-[19px] text-[15px] leading-5 text-[#222]">
          <p>
            Links til tidligere <span className="underline decoration-[#e00] decoration-wavy decoration-1">onboardingforløb</span>, der bruges som inspiration (også vedhæftet):
          </p>
          <ul className="mt-4 list-disc pl-10 leading-[18px]">
            <li>
              <a href="f2p://dossier/92314" className="text-[#0000ee] underline">
                <span className="underline decoration-[#e00] decoration-wavy decoration-1 underline-offset-2">Onboarding</span> 2021 (f2p://dossier/92314)
              </a>
            </li>
            <li />
          </ul>
        </article>
        <div className="mb-1 w-0.5 bg-[#c8c8c8]" />
        <aside className="flex w-[284px] flex-col">
          <ul className="pt-0.5 pr-1">
            {attachments.map(([kind, name], i) => (
              <li key={name}>
                <button className={`flex h-6 w-full items-center pt-px whitespace-nowrap ${i === 0 ? "bg-[#a6cdee]" : ""}`}>
                  <span className="flex w-7 shrink-0 justify-center pl-1">{kind === "folder" && <Triangle dir="right" />}</span>
                  <FileIcon kind={kind} />
                  <span className="pl-1.5">{name}</span>
                </button>
              </li>
            ))}
          </ul>
          <button className="mt-auto flex items-center gap-1 pb-1 pl-[9px] text-[#808080]">
            <Svg w={19} h={19}>
              <circle cx="9.500" cy="9.500" r="9" stroke="#707070" />
              <path d="M6.500 11l3-3 3 3" stroke="#707070" strokeWidth="2" />
            </Svg>
            Minimer dokumentområdet
          </button>
        </aside>
      </div>
      <footer className="flex h-5 shrink-0 items-center justify-end bg-[#206ccb] pt-px text-white">
        <StatusIcons />
        <span className="mr-[5px] ml-3">Forbindelse til F2 Server OK</span>
      </footer>
    </div>
  );
}

/* Dragged document with its drop hint */
function DropTarget() {
  return (
    <div className="absolute right-0 bottom-[197px] h-16 w-[269px] overflow-hidden border-3 border-[#ed1c24] bg-white pt-1.5 pl-2">
      <div className="flex h-[22px] items-center bg-[#adcfef] pl-0.5 whitespace-nowrap text-[#333]">
        <FileIcon kind="word" />
        <span className="mr-1.5 ml-1"><LockIcon /></span>
        <span className="w-[125px] shrink-0">Mødeskabelon</span>
        <span>14-12-2021 13:01</span>
      </div>
      <div className="mt-1 ml-[25px] flex h-[22px] w-[71px] items-center justify-center border border-black bg-white whitespace-nowrap">Kopier hertil</div>
    </div>
  );
}

export default function App() {
  return (
    <div className="relative h-screen w-full overflow-hidden bg-white font-[Lato,'Noto_Sans',sans-serif] text-[12px] leading-4 text-black">
      <RecordWindow />
      <MainWindow />
      <DropTarget />
    </div>
  );
}
